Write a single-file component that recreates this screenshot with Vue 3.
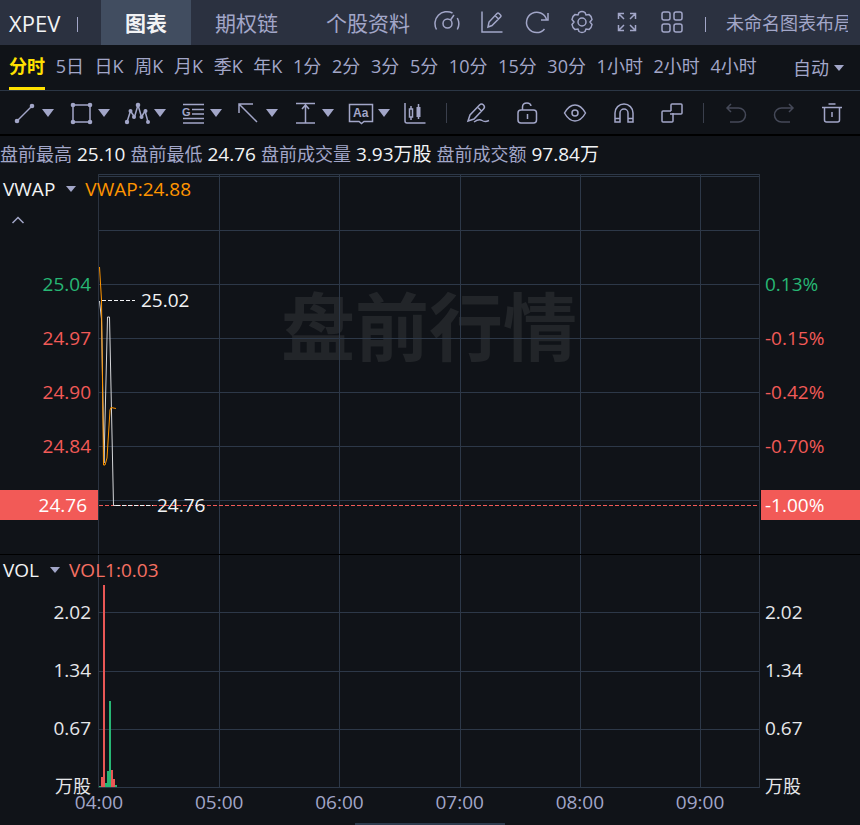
<script setup>
const periods = ['分时', '5日', '日K', '周K', '月K', '季K', '年K', '1分', '2分', '3分', '5分', '10分', '15分', '30分', '1小时', '2小时', '4小时']

const drawTools = ['趋势线', '矩形', '波浪', '黄金分割', '箭头', '测量', '文字']

const quotes = [
  { label: '盘前最高', value: '25.10' },
  { label: '盘前最低', value: '24.76' },
  { label: '盘前成交量', value: '3.93万股' },
  { label: '盘前成交额', value: '97.84万' },
]

const priceRows = [
  { price: '25.04', pct: '0.13%', tone: 'up' },
  { price: '24.97', pct: '-0.15%', tone: 'down' },
  { price: '24.90', pct: '-0.42%', tone: 'down' },
  { price: '24.84', pct: '-0.70%', tone: 'down' },
]
const priceGrid = [2, 56, 110, 164, 218, 272, 326]

const volumeRows = ['2.02', '1.34', '0.67']
const volumeGrid = [57, 116, 174, 232]

const bars = [
  { up: true, h: 1 },
  { up: false, h: 10 },
  { up: false, h: 202 },
  { up: true, h: 4 },
  { up: true, h: 16 },
  { up: true, h: 86 },
  { up: false, h: 17 },
  { up: false, h: 8 },
  { up: true, h: 2 },
]

// The session runs about 5.5 hours from 04:00.
const sessionHours = 5.49
const hours = ['04:00', '05:00', '06:00', '07:00', '08:00', '09:00']
const hourX = (i) => `${(i / sessionHours) * 100}%`
</script>

<template>
  <main class="app">
    <header class="topbar">
      <span class="symbol">XPEV</span>
      <i class="sep"></i>
      <nav class="tabs">
        <button class="tab active">图表</button>
        <button class="tab">期权链</button>
        <button class="tab">个股资料</button>
      </nav>
      <div class="top-icons">
        <button class="icon" aria-label="速度">
          <svg viewBox="0 0 26 26"><path d="M2.500 20.500A12 12 0 0 1 18.500 4M23.300 9a12 12 0 0 1 0 11.500M16.500 11l3.500-5" /><circle cx="13.500" cy="14.500" r="4.500" /></svg>
        </button>
        <button class="icon" aria-label="画线">
          <svg viewBox="0 0 26 26"><path d="M3 2.500v20.500h20.500M9 18l1-5 8-8.500q1-1 2 0l1.500 1.500q1 1 0 2l-8.500 8.500zM16 6.500l3.500 3.500" /></svg>
        </button>
        <button class="icon" aria-label="刷新">
          <svg viewBox="0 0 26 26"><path d="M20.500 20a10.200 10.200 0 1 1 2-9.500M24 4v7h-7" /></svg>
        </button>
        <button class="icon" aria-label="设置">
          <svg viewBox="0 0 26 26"><path d="M10 3.500Q13 1.500 16 3.500L17 6l3-.5q2.500 1.500 3 5L21 13l2 2.500q-.5 3.500-3 5L17 20l-1 2.500q-3 2-6 0L9 20l-3 .5q-2.500-1.500-3-5L5 13l-2-2.500q.5-3.500 3-5L9 6z" /><circle cx="13" cy="13" r="4" /></svg>
        </button>
        <button class="icon" aria-label="全屏">
          <svg viewBox="0 0 26 26"><path d="M4.500 10V4.500H10M4.500 4.500l5.500 5.500M16 4.500h5.500V10M21.500 4.500L16 10M4.500 16v5.500H10M4.500 21.500L10 16M21.500 16v5.500H16M21.500 21.500L16 16" /></svg>
        </button>
        <button class="icon" aria-label="布局">
          <svg viewBox="0 0 26 26"><rect x="3" y="3" width="8" height="8" rx="2" /><rect x="15" y="3" width="8" height="8" rx="2" /><rect x="3" y="15" width="8" height="8" rx="2" /><rect x="15" y="15" width="8" height="8" rx="2" /></svg>
        </button>
      </div>
      <i class="sep"></i>
      <span class="layout-name">未命名图表布局</span>
    </header>

    <div class="periods">
      <nav class="period-list">
        <button v-for="(p, i) in periods" :key="p" class="period" :class="{ active: i === 0 }">{{ p }}</button>
      </nav>
      <button class="auto">自动<i class="caret small"></i></button>
    </div>

    <div class="toolbar">
      <div class="draw-tools">
        <button v-for="(name, i) in drawTools" :key="name" class="tool" :aria-label="name">
          <svg viewBox="0 0 26 26">
            <template v-if="i === 0"><path d="M5 21L20 6" /><circle class="dot" cx="5" cy="21" r="2.300" /><circle class="dot" cx="20" cy="6" r="2.300" /></template>
            <template v-else-if="i === 1"><path d="M5 5h17v17H5z" /><circle class="dot" cx="5" cy="5" r="2.300" /><circle class="dot" cx="22" cy="5" r="2.300" /><circle class="dot" cx="5" cy="22" r="2.300" /><circle class="dot" cx="22" cy="22" r="2.300" /></template>
            <template v-else-if="i === 2"><path d="M3 22l3.500-11 4 6L14 5l3.500 12 3.500-6 3 11" /><circle class="dot" cx="3" cy="22" r="2.200" /><circle class="dot" cx="6.500" cy="11" r="2" /><circle class="dot" cx="10" cy="17" r="2" /><circle class="dot" cx="14" cy="5" r="2.300" /><circle class="dot" cx="17.500" cy="17" r="2" /><circle class="dot" cx="21.500" cy="11" r="2" /><circle class="dot" cx="24" cy="22" r="2" /></template>
            <template v-else-if="i === 3"><path d="M3 4.500h21M12 9.500h12M12 14h12M3 18.500h21M3 23h21" /><text x="2" y="16" font-size="11">G</text></template>
            <template v-else-if="i === 4"><path d="M21 22L3 4M3 13V4h14" /></template>
            <template v-else-if="i === 5"><path d="M4 3.500h19M4 23h19M13.500 5v18M10 9l3.500-4L17 9" /></template>
            <template v-else><path d="M1.500 4.500h23v17H16l-2.500 2-2.500-2H1.500z" /><text x="5" y="17" font-size="12">Aa</text></template>
          </svg>
          <i class="caret"></i>
        </button>
      </div>
      <button class="icon" aria-label="K线">
        <svg viewBox="0 0 26 26"><path d="M3 3v18q0 2 2 2h18.500M9 6v3M9 17v3M7.500 9h3v8h-3zM16.500 4v15" /><path class="dot" d="M14.500 7h4v10h-4z" /></svg>
      </button>
      <i class="rule"></i>
      <div class="actions">
        <button class="icon" aria-label="编辑">
          <svg viewBox="0 0 26 26"><path d="M3 21l2-6 9.500-10q2-2 4 0t0 4L9 19zM12.500 7l4 4M9 22q5-3.500 8-1.500t7 0" /></svg>
        </button>
        <button class="icon" aria-label="锁定">
          <svg viewBox="0 0 26 26"><rect x="4" y="10" width="18.500" height="13" rx="3" /><path d="M8.500 10V7q0-4 4.500-4 3.500 0 4 3M13.500 14v5" /></svg>
        </button>
        <button class="icon" aria-label="显示">
          <svg viewBox="0 0 26 26"><path d="M2.500 13Q7 5 13 5t10.500 8Q19 21 13 21T2.500 13z" /><circle cx="13" cy="13" r="3" /></svg>
        </button>
        <button class="icon" aria-label="磁吸">
          <svg viewBox="0 0 26 26"><path d="M4 22V13a9 9 0 0 1 18 0v9h-5v-9a4 4 0 0 0-8 0v9zM4 18.500h5M17 18.500h5" /></svg>
        </button>
        <button class="icon" aria-label="同步">
          <svg viewBox="0 0 26 26"><path d="M12 9V5q0-1 1-1h9q1 0 1 1v8q0 1-1 1h-7" /><path d="M12 11H4q-1 0-1 1v9q0 1 1 1h9q1 0 1-1v-8M11 14h4M12 9v2" /></svg>
        </button>
      </div>
      <i class="rule"></i>
      <div class="history">
        <button class="icon dim" aria-label="撤销">
          <svg viewBox="0 0 26 26"><path d="M8 4L4 8l4 4M4 8h11.500a7 7 0 0 1 0 14H7" /></svg>
        </button>
        <button class="icon dim" aria-label="重做">
          <svg viewBox="0 0 26 26"><path d="M18 4l4 4-4 4M22 8H10.500a7 7 0 0 0 0 14H19" /></svg>
        </button>
        <button class="icon" aria-label="删除">
          <svg viewBox="0 0 26 26"><path d="M3 7.500h20M9.500 4h7M5.500 8v12q0 2 2 2h11q2 0 2-2V8M13 12v5" /></svg>
        </button>
      </div>
    </div>

    <dl class="quotes">
      <div v-for="q in quotes" :key="q.label"><dt>{{ q.label }}</dt><dd>{{ q.value }}</dd></div>
    </dl>

    <section class="pane price">
      <div class="legend">
        <button class="indicator">VWAP<i class="caret small"></i></button>
        <span class="vwap">VWAP:24.88</span>
      </div>
      <button class="collapse" aria-label="收起"><svg viewBox="0 0 14 8"><path d="M1.500 7L7 1.500 12.500 7" /></svg></button>
      <div class="axis left">
        <span v-for="r in priceRows" :key="r.price" :class="r.tone">{{ r.price }}</span>
        <b class="tag">24.76</b>
      </div>
      <svg class="plot">
        <text class="watermark" x="50%" y="181">盘前行情</text>
        <g class="grid">
          <line x1="0" x2="100%" y1="0.500" y2="0.500" />
          <line v-for="y in priceGrid" :key="y" x1="0" x2="100%" :y1="y + 0.500" :y2="y + 0.500" />
          <g transform="translate(0.500 0)">
            <line v-for="(h, i) in hours.slice(1)" :key="h" :x1="hourX(i + 1)" :x2="hourX(i + 1)" y1="0" y2="100%" />
          </g>
        </g>
        <line class="last" x1="0" x2="100%" y1="331.500" y2="331.500" />
        <path class="line-price" d="M0.500 127L2.500 145 5 289 8.500 143H10.500L14.500 331.500H17" />
        <path class="line-vwap" d="M0.500 93L2.500 126 3.500 210 4.500 291H6L8 284 11 236 12 233.500 17 234.500" />
        <path class="mark" d="M3 126.500H36M17 331.500H54" />
        <text class="note" x="42" y="133">25.02</text>
        <text class="note" x="58" y="338">24.76</text>
      </svg>
      <div class="axis right">
        <span v-for="r in priceRows" :key="r.pct" :class="r.tone">{{ r.pct }}</span>
        <b class="tag">-1.00%</b>
      </div>
    </section>

    <section class="pane volume">
      <div class="legend">
        <button class="indicator">VOL<i class="caret small"></i></button>
        <span class="vol">VOL1:0.03</span>
      </div>
      <div class="axis left">
        <span v-for="v in volumeRows" :key="v">{{ v }}</span>
        <span class="unit">万股</span>
      </div>
      <svg class="plot">
        <g class="grid">
          <line v-for="y in volumeGrid" :key="y" x1="0" x2="100%" :y1="y + 0.500" :y2="y + 0.500" />
          <g transform="translate(0.500 0)">
            <line v-for="(h, i) in hours.slice(1)" :key="h" :x1="hourX(i + 1)" :x2="hourX(i + 1)" y1="0" y2="100%" />
          </g>
        </g>
        <rect v-for="(b, i) in bars" :key="i" :class="b.up ? 'bar-up' : 'bar-down'" :x="i * 2" :y="232 - b.h" width="2" :height="b.h" />
      </svg>
      <div class="axis right">
        <span v-for="v in volumeRows" :key="v">{{ v }}</span>
        <span class="unit">万股</span>
      </div>
    </section>

    <footer class="times">
      <svg class="time-scale">
        <text v-for="(h, i) in hours" :key="h" :x="hourX(i)" y="21">{{ h }}</text>
      </svg>
      <i class="scroll-thumb"></i>
    </footer>
  </main>
</template>

<style>
body {
  margin: 0;
  background: #101318;
}
</style>

<style scoped>
.app {
  color: #a2a6c8;
  background: #101318;
  font: 18px/24px "Open Sans", "Noto Sans CJK SC", sans-serif;
  overflow: hidden;
}
button {
  margin: 0;
  padding: 0;
  border: 0;
  background: none;
  color: inherit;
  font: inherit;
  white-space: nowrap;
  cursor: pointer;
}
svg {
  display: block;
  fill: none;
  stroke: currentColor;
  stroke-width: 1.5;
}
.icon svg,
.tool svg {
  width: 26px;
  height: 26px;
}
.dot {
  fill: currentColor;
  stroke: none;
}
text {
  fill: currentColor;
  stroke: none;
}
.tool text {
  font-family: "Liberation Sans", sans-serif;
  font-weight: 700;
}
.caret {
  flex: none;
  border: 6px solid transparent;
  border-top: 8px solid currentColor;
  border-bottom: 0;
}
.caret.small {
  border-width: 6px 5px 0;
}

.topbar {
  display: flex;
  align-items: center;
  height: 45px;
  padding: 0 12px 0 9px;
  box-sizing: border-box;
  background: #2b3140;
}
.symbol {
  width: 68px;
  color: #f2f3f5;
  font-size: 22px;
}
.sep {
  flex: none;
  width: 1px;
  height: 15px;
  margin-top: 4px;
  background: #a2a6c8;
}
.tabs {
  display: flex;
  height: 100%;
  margin-left: 23px;
}
.tab {
  padding: 0 24px;
  font-size: 21px;
}
.tab.active {
  color: #f2f3f5;
  background: #414d60;
  font-weight: 700;
}
.top-icons {
  display: flex;
  flex: 1;
  justify-content: space-between;
  margin-right: 20px;
  padding-bottom: 2px;
}
.layout-name {
  width: 122px;
  margin-left: 20px;
  overflow: hidden;
  white-space: nowrap;
}

.periods {
  display: flex;
  height: 45px;
  padding: 0 16px 0 9px;
  border-bottom: 1px solid #2b3645;
}
.period-list {
  display: flex;
  flex: 1;
  justify-content: space-between;
  margin-right: 36px;
}
.period {
  height: 45px;
  padding-bottom: 1px;
  border-bottom: 3px solid transparent;
}
.period.active {
  color: #ffe100;
  border-bottom-color: #ffe100;
  font-weight: 700;
}
.auto {
  display: flex;
  align-items: center;
  gap: 5px;
}

.toolbar {
  display: flex;
  align-items: center;
  height: 43px;
  padding: 0 15px 0 12px;
  border-bottom: 2px solid #000;
}
.draw-tools {
  display: flex;
  gap: 14px;
}
.tool {
  display: flex;
  align-items: center;
  gap: 4px;
}
.draw-tools + .icon {
  margin-left: 12px;
}
.rule {
  width: 1px;
  height: 20px;
  background: #3a3f4c;
}
.draw-tools ~ .rule {
  margin-left: 18px;
}
.actions {
  display: flex;
  flex: 1;
  justify-content: space-between;
  margin-left: 18px;
}
.history {
  display: flex;
  gap: 22px;
  margin-left: 19px;
}
.dim {
  color: #454958;
}

.quotes {
  display: flex;
  gap: 5px;
  height: 38px;
  margin: 0;
  line-height: 36px;
  white-space: nowrap;
}
.quotes div {
  display: flex;
  gap: 5px;
}
.quotes dd {
  margin: 0;
  color: #f2f3f5;
  font-size: 19px;
}

.pane {
  position: relative;
  display: grid;
  grid-template-rows: minmax(0, 1fr);
  grid-template-columns: 98px minmax(0, 1fr) 100px;
  font-size: 19px;
}
.price {
  height: 380px;
  border-bottom: 1px solid #000;
}
.volume {
  height: 233px;
}
.plot {
  width: 100%;
  height: 100%;
  box-sizing: border-box;
  border: solid #2b3340;
  border-width: 0 1px;
}
.grid line {
  stroke: #2d3848;
  stroke-width: 1;
  shape-rendering: crispEdges;
}
.legend {
  position: absolute;
  top: 3px;
  left: 3px;
  display: flex;
  gap: 9px;
}
.indicator {
  display: flex;
  align-items: center;
  gap: 11px;
  color: #f2f3f5;
}
.indicator .caret {
  color: #a2a6c8;
}
.vwap {
  color: #ff9500;
}
.vol {
  color: #f57062;
}
.collapse {
  position: absolute;
  top: 42px;
  left: 11px;
}
.collapse svg {
  width: 14px;
  height: 8px;
}
.axis {
  position: relative;
  display: flex;
  flex-direction: column;
}
.left {
  padding-right: 7px;
  text-align: right;
}
.right {
  padding-left: 5px;
}
.price .axis {
  padding-top: 83px;
}
.price .axis span {
  line-height: 54px;
}
.volume .axis {
  padding-top: 28px;
  color: #e6e7ea;
}
.volume .axis span {
  line-height: 58px;
}
.volume .axis .unit {
  font-size: 18px;
}
.up {
  color: #27b774;
}
.down {
  color: #f25a57;
}
.tag {
  position: absolute;
  top: 316px;
  right: 0;
  left: 0;
  color: #fff;
  background: #f25a57;
  font-weight: 400;
  line-height: 30px;
}
.left .tag {
  padding-right: 11px;
}
.right .tag {
  left: 1px;
  padding-left: 4px;
}
.watermark {
  fill: #222529;
  font-size: 74px;
  font-weight: 700;
  text-anchor: middle;
}
.last {
  stroke: #f25a57;
  stroke-width: 1;
  stroke-dasharray: 4 2;
}
.line-price {
  stroke: #d5d6d9;
  stroke-width: 1;
}
.line-vwap {
  stroke: #ff9500;
  stroke-width: 1;
}
.mark {
  stroke: #f2f3f5;
  stroke-width: 1;
  stroke-dasharray: 4 2;
}
.note {
  fill: #f2f3f5;
}
.bar-up {
  fill: #27b774;
  stroke: none;
}
.bar-down {
  fill: #e95755;
  stroke: none;
}

.times {
  display: flex;
  flex-direction: column;
  align-items: center;
  justify-content: space-between;
  height: 37px;
  font-size: 19px;
}
.time-scale {
  align-self: stretch;
  width: calc(100% - 200px);
  height: 28px;
  margin: 0 99px;
  overflow: visible;
}
.time-scale text {
  text-anchor: middle;
}
.scroll-thumb {
  width: 150px;
  height: 2px;
  background: #2d3b4d;
}
</style>
